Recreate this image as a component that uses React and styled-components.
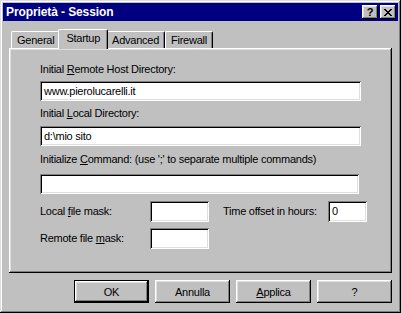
import React from "react";
import styled, { createGlobalStyle } from "styled-components";

const GlobalStyle = createGlobalStyle`
  html, body {
    margin: 0;
    padding: 0;
    background: #c0c0c0;
  }
  * {
    box-sizing: border-box;
  }
`;

const Window = styled.div`
  width: 401px;
  height: 313px;
  padding: 3px;
  background: #c0c0c0;
  display: flex;
  flex-direction: column;
  font-family: "Liberation Sans", Arial, sans-serif;
  font-size: 11px;
  letter-spacing: -0.25px;
  color: #000;
  box-shadow: inset -1px -1px #000, inset 1px 1px #dfdfdf,
    inset -2px -2px #808080, inset 2px 2px #fff;
`;

const TitleBar = styled.div`
  height: 18px;
  background: #000080;
  display: flex;
  align-items: center;
  padding: 0 2px 0 3px;
`;

const Title = styled.span`
  flex: 1;
  color: #fff;
  font-weight: bold;
  font-size: 12px;
  letter-spacing: -0.1px;
`;

const CaptionButton = styled.div`
  width: 16px;
  height: 14px;
  margin-left: ${(p) => (p.$gap ? "2px" : "0")};
  background: #c0c0c0;
  display: flex;
  align-items: center;
  justify-content: center;
  font-weight: bold;
  font-size: 11px;
  line-height: 14px;
  box-shadow: inset -1px -1px #000, inset 1px 1px #fff,
    inset -2px -2px #808080, inset 2px 2px #dfdfdf;
`;

const Body = styled.div`
  flex: 1;
  display: flex;
  flex-direction: column;
  padding: 8px 6px 0 6px;
`;

const TabRow = styled.div`
  height: 19px;
  display: flex;
  align-items: flex-end;
  padding-left: 2px;
`;

const Tab = styled.div`
  position: relative;
  height: ${(p) => (p.$active ? "20px" : "17px")};
  margin: ${(p) => (p.$active ? "0 -2px -1px -2px" : "0")};
  padding: ${(p) => (p.$active ? "2px 7px 0 7px" : "2px 5px 0 5px")};
  z-index: ${(p) => (p.$active ? 1 : 0)};
  background: #c0c0c0;
  border-top: 1px solid #fff;
  border-left: 1px solid #fff;
  border-right: 1px solid #000;
  border-radius: 2px 2px 0 0;
  box-shadow: inset -1px 0 #808080;
  line-height: 13px;
`;

const Panel = styled.div`
  height: 225px;
  display: flex;
  flex-direction: column;
  padding: 15px 0 0 31px;
  box-shadow: inset -1px -1px #000, inset 1px 1px #fff,
    inset -2px -2px #808080, inset 2px 2px #dfdfdf;
`;

const Label = styled.div`
  line-height: 13px;
  height: 13px;
  margin-top: ${(p) => p.$mt || 0}px;
  margin-left: ${(p) => p.$ml || 0}px;
  white-space: nowrap;
`;

const Field = styled.div`
  width: ${(p) => p.$w}px;
  height: ${(p) => p.$h || 21}px;
  margin-top: ${(p) => p.$mt || 0}px;
  background: #fff;
  padding-left: 4px;
  line-height: ${(p) => p.$h || 21}px;
  white-space: nowrap;
  box-shadow: inset 1px 1px #808080, inset -1px -1px #fff,
    inset 2px 2px #000, inset -2px -2px #dfdfdf;
`;

const MaskGrid = styled.div`
  margin-top: 7px;
  display: grid;
  grid-template-columns: 110px 59px 119px 39px;
  row-gap: 6px;
  align-items: center;
`;

const U = styled.span`
  text-decoration: underline;
  text-underline-offset: 1px;
`;

const ButtonRow = styled.div`
  display: flex;
  justify-content: flex-end;
  gap: 6px;
  margin-top: 7px;
`;

const Button = styled.div`
  width: 75px;
  height: 23px;
  display: flex;
  align-items: center;
  justify-content: center;
  background: #c0c0c0;
  box-shadow: ${(p) =>
    p.$default
      ? "inset 0 0 0 1px #000, inset -2px -2px #000, inset 2px 2px #fff, inset -3px -3px #808080, inset 3px 3px #dfdfdf"
      : "inset -1px -1px #000, inset 1px 1px #fff, inset -2px -2px #808080, inset 2px 2px #dfdfdf"};
`;

const CloseIcon = () => (
  <svg width="8" height="7" viewBox="0 0 8 7" shapeRendering="crispEdges">
    <path
      d="M0 0h2v1h-2zM6 0h2v1h-2zM1 1h2v1h-2zM5 1h2v1h-2zM2 2h4v1h-4zM3 3h2v1h-2zM2 4h4v1h-4zM1 5h2v1h-2zM5 5h2v1h-2zM0 6h2v1h-2zM6 6h2v1h-2z"
      fill="#000"
    />
  </svg>
);

export default function App() {
  return (
    <>
      <GlobalStyle />
      <Window>
        <TitleBar>
          <Title>Proprietà - Session</Title>
          <CaptionButton>?</CaptionButton>
          <CaptionButton $gap>
            <CloseIcon />
          </CaptionButton>
        </TitleBar>
        <Body>
          <TabRow>
            <Tab>General</Tab>
            <Tab $active>Startup</Tab>
            <Tab>Advanced</Tab>
            <Tab>Firewall</Tab>
          </TabRow>
          <Panel>
            <Label>
              Initial <U>R</U>emote Host Directory:
            </Label>
            <Field $w={321} $h={20} $mt={5}>
              www.pierolucarelli.it
            </Field>
            <Label $mt={6}>
              Initial <U>L</U>ocal Directory:
            </Label>
            <Field $w={321} $h={20} $mt={6}>
              d:\mio sito
            </Field>
            <Label $mt={7}>
              Initialize <U>C</U>ommand: (use ';' to separate multiple commands)
            </Label>
            <Field $w={319} $h={20} $mt={8} />
            <MaskGrid>
              <Label>
                Local <U>f</U>ile mask:
              </Label>
              <Field $w={59} />
              <Label $ml={14}>Time offset in hours:</Label>
              <Field $w={39}>0</Field>
              <Label>
                Remote file <U>m</U>ask:
              </Label>
              <Field $w={59} />
            </MaskGrid>
          </Panel>
          <ButtonRow>
            <Button $default>OK</Button>
            <Button>Annulla</Button>
            <Button>
              <span>
                <U>A</U>pplica
              </span>
            </Button>
            <Button>?</Button>
          </ButtonRow>
        </Body>
      </Window>
    </>
  );
}
